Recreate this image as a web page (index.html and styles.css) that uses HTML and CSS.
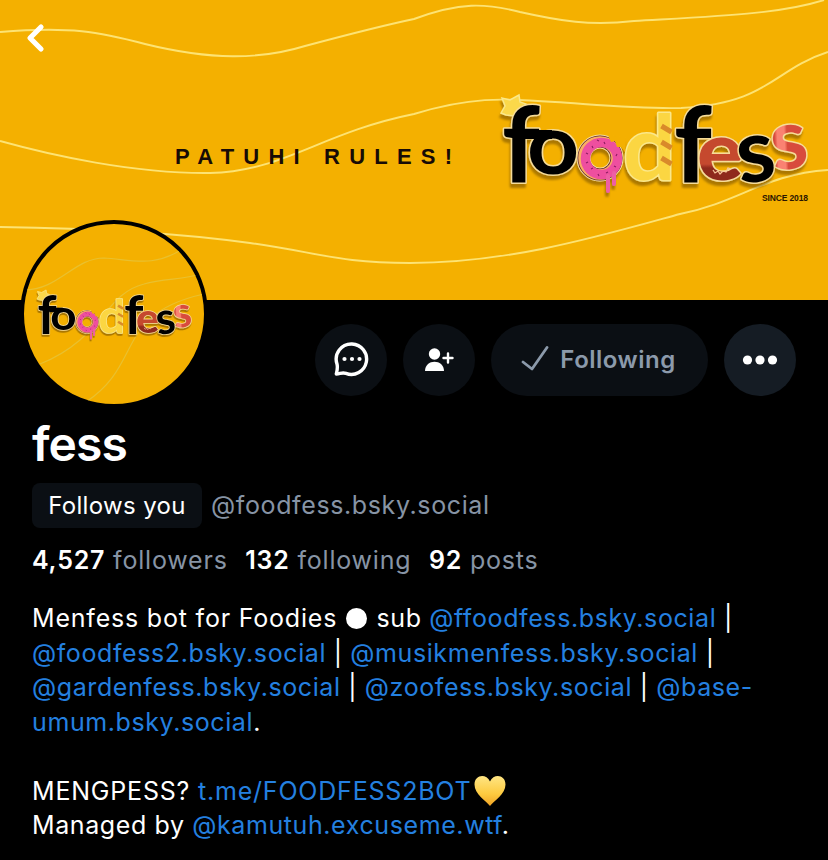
FILE: index.html
```html
<!DOCTYPE html>
<html lang="en">
<head>
    <meta charset="UTF-8">
    <meta name="viewport" content="width=device-width, initial-scale=1.0">
    <title>fess (@foodfess.bsky.social)</title>
    <link rel="stylesheet" href="styles.css">
</head>
<body>
    <header class="banner">
        <svg class="banner-art" viewBox="0 0 828 300">
            <defs>
                <filter id="shadow" x="-10%" y="-10%" width="120%" height="130%">
                    <feDropShadow dx="-1" dy="4" stdDeviation="1.2" flood-color="#7a5200" flood-opacity="0.6"/>
                </filter>
                <linearGradient id="sausage" x1="0" y1="0" x2="0" y2="1">
                    <stop offset="0.66" stop-color="#c5482f"/>
                    <stop offset="0.7" stop-color="#8f2a1d"/>
                </linearGradient>
                <linearGradient id="bacon" x1="0" y1="0" x2="1" y2="0.25">
                    <stop offset="0.25" stop-color="#d84c3c"/>
                    <stop offset="0.32" stop-color="#fa8272"/>
                    <stop offset="0.5" stop-color="#fa8272"/>
                    <stop offset="0.57" stop-color="#d84c3c"/>
                </linearGradient>
                <g id="logo" filter="url(#shadow)">
                    <path class="crown" d="M506 115 L501 113 L505 106 L502 98 L510 100 L519 95 L520 102 L526 104 L514 116 Z"/>
                    <g class="outline">
                        <text class="letter" font-size="106" transform="translate(502 182)">f</text>
                        <text class="letter" font-size="84" transform="translate(527 174) scale(1.08 1)">o</text>
                        <path class="bar" d="M525 134.500 H552"/>
                        <!-- donut: bun, icing, drips and sprinkles -->
                        <circle class="rim" cx="600" cy="158" r="16.500"/>
                        <circle class="edge" cx="600" cy="158" r="16.500"/>
                        <circle class="bun" cx="600" cy="158" r="16.500"/>
                        <circle class="icing" cx="601.500" cy="158.500" r="16"/>
                        <path class="drip" d="M608 176 V191 M614 173 V184"/>
                        <path class="bite" d="M608 135 L611 142 L615 141 L617 147 L621 147 L625 152 L626 138 Z"/>
                        <path class="sprinkles" d="M592 146l1 2M586 153l2 1M586 163l2-1M591 169l2-1M598 174l1 2M606 173l2-1M614 166l2 1M616 156l1-2M597 140l2 1M604 142l1 2"/>
                        <text class="letter cookie" font-size="89" transform="translate(623 180) scale(1.04 1)">d</text>
                        <text class="letter" font-size="106" transform="translate(674 182)">f</text>
                        <text class="letter sausage" font-size="82" transform="translate(697 180) scale(1.05 1)">e</text>
                        <text class="letter" font-size="88" transform="translate(740 184) rotate(-8)">s</text>
                        <text class="letter bacon" font-size="84" transform="translate(774 171) rotate(-8)">s</text>
                    </g>
                    <!-- wafer stripes -->
                    <path class="stripes" d="M661.500 126 L671.500 132 M661.500 142 L671.500 148 M661.500 158 L671.500 164"/>
                    <!-- teeth marks on the sausage -->
                    <path class="teeth" d="M713 170l2 3 3-2 2 3 3-3 3 1 2-4 3 1"/>
                </g>
            </defs>
            <g class="waves">
                <path d="M0 32 C70 26 100 32 145 44 C210 60 260 60 305 46 C350 34 390 24 414 19 C460 2 485 3 520 12 C560 21 590 26 634 21 C720 16 780 14 824 0"/>
                <path d="M0 141 C50 155 135 174 210 173 C285 171 320 133 414 114 C470 97 500 98 555 102 C600 105 640 109 681 108 C770 103 772 70 828 52"/>
                <path d="M0 227 C80 228 170 232 250 243 C320 253 340 263 410 263 C510 263 600 236 680 214 C740 202 765 174 828 170"/>
            </g>
            <text class="rules" x="175" y="164" textLength="277">PATUHI RULES!</text>
            <use href="#logo"/>
            <text class="since" x="762" y="201" textLength="46">SINCE 2018</text>
        </svg>
        <button class="back" aria-label="Back">
            <svg width="20" height="30" viewBox="0 0 20 30"><path d="M16 4 L5 15 L16 26"/></svg>
        </button>
    </header>

    <main class="profile">
        <div class="top-row">
            <div class="avatar">
                <svg width="180" height="180" viewBox="0 0 180 180">
                    <g class="waves soft">
                        <path d="M0 66 C35 66 50 34 80 34 C110 36 130 44 160 24"/>
                        <path d="M16 140 C80 114 80 70 120 60 C140 54 160 56 176 50"/>
                        <path d="M62 178 C120 140 90 90 180 70"/>
                    </g>
                    <use href="#logo" transform="translate(-240 18) scale(0.505)"/>
                </svg>
            </div>
            <div class="actions">
                <button class="round" aria-label="Message">
                    <svg width="36" height="36" viewBox="0 0 36 36">
                        <path class="bubble" d="M19 2 A15.200 15.200 0 1 1 13 31.400 C9 30 7 32 3.300 32 C4 29 5 26 4 22 A15.200 15.200 0 0 1 19 2 Z"/>
                        <circle cx="11.500" cy="17" r="2.100"/><circle cx="19" cy="17" r="2.100"/><circle cx="26.500" cy="17" r="2.100"/>
                    </svg>
                </button>
                <button class="round" aria-label="Add to starter pack">
                    <svg width="30" height="26" viewBox="0 0 30 26">
                        <circle cx="10.500" cy="7" r="5.700"/>
                        <path d="M1 24 C1 11.500 20 11.500 20 24 Z"/>
                        <path class="plus" d="M24 6.500 V15.500 M19.500 11 H28.500"/>
                    </svg>
                </button>
                <button class="following">
                    <svg width="28" height="26" viewBox="0 0 28 26"><path d="M2 16 L11 23 L26 1.500"/></svg>
                    <span>Following</span>
                </button>
                <button class="round more" aria-label="More">
                    <svg width="36" height="12" viewBox="0 0 36 12">
                        <circle cx="5.500" cy="6" r="4.600"/><circle cx="18" cy="6" r="4.600"/><circle cx="30.500" cy="6" r="4.600"/>
                    </svg>
                </button>
            </div>
        </div>

        <h1>fess</h1>
        <div class="handle-row">
            <span class="badge">Follows you</span>
            <span class="handle">@foodfess.bsky.social</span>
        </div>
        <div class="stats">
            <span><b>4,527</b> followers</span>
            <span><b>132</b> following</span>
            <span><b>92</b> posts</span>
        </div>
        <p class="bio"><span class="wide">Menfess bot for Foodies</span> <span class="dot"></span> sub <a>@ffoodfess.bsky.social</a> |<br>
            <a>@foodfess2.bsky.social</a> | <a>@musikmenfess.bsky.social</a> |<br>
            <a>@gardenfess.bsky.social</a> | <a>@zoofess.bsky.social</a> | <a>@base-<br>umum.bsky.social</a>.<br>
            <br>
            <span class="wide">MENGPESS? <a>t.me/FOODFESS2BOT</a></span><svg class="heart" width="34" height="32" viewBox="0 0 34 32">
                <defs>
                    <linearGradient id="gold" x1="0" y1="0" x2="0" y2="1">
                        <stop offset="0" stop-color="#ffe583"/>
                        <stop offset="0.6" stop-color="#fdca3f"/>
                        <stop offset="1" stop-color="#f0a325"/>
                    </linearGradient>
                </defs>
                <path fill="url(#gold)" d="M17 31 C13 26 1.500 19 1.500 9.500 C1.500 0 13 -2 17 6.500 C21 -2 32.500 0 32.500 9.500 C32.500 19 21 26 17 31 Z"/>
            </svg><br>
            Managed by <a>@kamutuh.excuseme.wtf</a>.</p>
    </main>
</body>
</html>
```
FILE: styles.css
```css
*{
    box-sizing: border-box;
}
body{
    margin: 0;
    background-color: #000;
    color: #fff;
    font-family: Inter, "Liberation Sans", sans-serif;
    overflow: hidden;
}
button{
    border: none;
    padding: 0;
    color: inherit;
    font-family: inherit;
    cursor: pointer;
}

/* banner */
.banner{
    position: relative;
    height: 300px;
    background-color: #f4b000;
}
.banner-art{
    display: block;
    width: 828px;
    height: 300px;
}
.waves path{
    fill: none;
    stroke: #fde373;
    stroke-width: 1.9;
}
.waves.soft path{
    stroke: #e9c02e;
    stroke-width: 1.2;
}
.rules{
    font: bold 22px "Liberation Sans", Arial, sans-serif;
    fill: #170b06;
}
.since{
    font: bold 8.5px "Liberation Sans", Arial, sans-serif;
    fill: #2a1500;
}
.back{
    position: absolute;
    left: 25px;
    top: 23px;
    background: none;
}
.back svg{
    display: block;
    fill: none;
    stroke: #fff;
    stroke-width: 5.2;
    stroke-linecap: round;
    stroke-linejoin: round;
}

/* logo */
.letter{
    font-family: Lato, sans-serif;
    font-weight: 700;
    fill: #000;
}
.outline{
    stroke: #f6dc98;
    stroke-width: 3px;
    stroke-linejoin: round;
    paint-order: stroke;
}
.letter.cookie{
    fill: #fbd643;
    stroke: #fbe88a;
}
.letter.sausage{
    font-weight: 900;
    fill: url(#sausage);
}
.letter.bacon{
    fill: url(#bacon);
}
.bar{
    fill: none;
    stroke: #000;
    stroke-width: 9;
}
.rim{
    fill: none;
    stroke: #f6dc98;
    stroke-width: 14;
}
.edge{
    fill: none;
    stroke: #5c2530;
    stroke-width: 12;
}
.bun{
    fill: none;
    stroke: #f9ae62;
    stroke-width: 10.5;
}
.icing{
    fill: none;
    stroke: #ee4f9f;
    stroke-width: 9.5;
}
.bite{
    fill: #f4b000;
    stroke: none;
}
.crown{
    fill: #fbd84b;
    stroke: #fbe88a;
    stroke-width: 1.5;
}
.drip{
    fill: none;
    stroke: #ee5fa5;
    stroke-width: 4;
    stroke-linecap: round;
}
.sprinkles{
    fill: none;
    stroke: #8f1d62;
    stroke-width: 1.2;
}
.stripes{
    fill: none;
    stroke: #d98a2b;
    stroke-width: 5;
}
.teeth{
    fill: none;
    stroke: #f6c79a;
    stroke-width: 1.2;
}

/* profile */
.profile{
    padding: 0 32px;
}
.top-row{
    display: flex;
    justify-content: space-between;
    height: 120px;
}
.avatar{
    position: relative;
    width: 188px;
    height: 188px;
    margin: -80px 0 0 -12px;
    border: 4px solid #000;
    border-radius: 50%;
    background-color: #f4b000;
    overflow: hidden;
}
.avatar svg{
    display: block;
}
.actions{
    display: flex;
    gap: 16px;
    padding-top: 24px;
}
.round,
.following{
    display: flex;
    align-items: center;
    justify-content: center;
    height: 72px;
    border-radius: 36px;
    background-color: #0b0f14;
}
.round{
    width: 72px;
}
.round svg{
    fill: #fff;
}
.round .bubble{
    fill: none;
    stroke: #fff;
    stroke-width: 3.4;
    stroke-linejoin: round;
}
.round .plus{
    fill: none;
    stroke: #fff;
    stroke-width: 2.4;
    stroke-linecap: round;
}
.more{
    background-color: #151c24;
}
.following{
    width: 217px;
    gap: 11px;
    padding: 0 2px 2px 0;
    color: #8c9aab;
    font-size: 24px;
    font-weight: 600;
    letter-spacing: 0.5px;
}
.following svg{
    fill: none;
    stroke: #8c9aab;
    stroke-width: 2.8;
    stroke-linecap: round;
    stroke-linejoin: round;
}
h1{
    margin: 0;
    height: 63px;
    font-size: 48px;
    font-weight: 600;
    line-height: 48px;
    letter-spacing: -0.9px;
}
.handle-row{
    display: flex;
    align-items: center;
    gap: 9px;
    height: 45px;
}
.badge{
    width: 170px;
    height: 45px;
    border-radius: 8px;
    background-color: #0b0f14;
    font-size: 24px;
    line-height: 45px;
    text-align: center;
    letter-spacing: 0.35px;
}
.handle{
    color: #8794a5;
    font-size: 25px;
    line-height: 45px;
    letter-spacing: 0.62px;
}
.stats{
    display: flex;
    gap: 17.5px;
    margin-top: 15px;
    color: #8794a5;
    font-size: 25px;
    line-height: 34px;
    letter-spacing: 0.8px;
}
.stats b{
    color: #fff;
    font-weight: 600;
}
.bio{
    margin: 24px 0 0;
    font-size: 25px;
    line-height: 34.5px;
    letter-spacing: 0.6px;
    white-space: nowrap;
}
.bio a{
    color: #2480e0;
}
.bio .wide{
    letter-spacing: 0.8px;
}
.dot{
    display: inline-block;
    width: 21px;
    height: 21px;
    margin: 0 2px 0 1px;
    border-radius: 50%;
    background-color: #fff;
    vertical-align: -2px;
}
.heart{
    margin: -8px 0 -4px 2px;
    vertical-align: -3px;
}
```
